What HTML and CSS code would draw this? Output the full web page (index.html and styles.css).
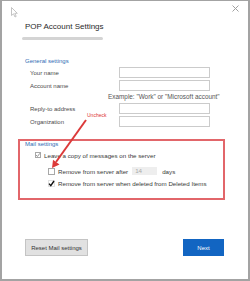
FILE: index.html
```html
<!DOCTYPE html>
<html lang="en">
<head>
    <meta charset="UTF-8">
    <title>POP Account Settings</title>
    <link rel="stylesheet" href="styles.css">
</head>
<body>
    <div class="dialog">
        <svg class="cursor" width="7" height="11" viewBox="0 0 7 11">
            <path d="M0.5 0.5 L0.5 8.5 L2.5 6.8 L4 10 L5.2 9.4 L3.8 6.3 L6.3 6.3 Z" fill="#fff" stroke="#b5b5b5" stroke-width="0.8"/>
        </svg>
        <div class="top">
            <svg class="close" width="7" height="7" viewBox="0 0 7 7">
                <path d="M0.5 0.5 L6.5 6.5 M6.5 0.5 L0.5 6.5" stroke="#a0a0a0" stroke-width="1"/>
            </svg>
        </div>
        <h1 class="title">POP Account Settings</h1>
        <div class="email"></div>

        <h2 class="group">General settings</h2>
        <div class="fields">
            <div class="row"><label>Your name</label><span class="box"></span></div>
            <div class="row"><label>Account name</label><span class="box"></span></div>
            <p class="hint">Example: "Work" or "Microsoft account"</p>
            <div class="row"><label>Reply-to address</label><span class="box"></span></div>
            <div class="row"><label>Organization</label><span class="box"></span></div>
        </div>

        <section class="mail">
            <h2 class="group">Mail settings</h2>
            <div class="check lvl1">
                <span class="cb">
                    <svg width="6" height="6" viewBox="0 0 6 6"><path d="M1 3 L2.4 4.5 L5 1.2" fill="none" stroke="#8a8a8a" stroke-width="0.9"/></svg>
                </span>Leave a copy of messages on the server
            </div>
            <div class="check lvl2">
                <span class="cb big"></span>Remove from server after<span class="days">14</span>days
            </div>
            <div class="check lvl2">
                <span class="cb big dark">
                    <svg width="7" height="7" viewBox="0 0 7 7"><path d="M1 3.6 L2.8 5.6 L6 1" fill="none" stroke="#111" stroke-width="1.4"/></svg>
                </span>Remove from server when deleted from Deleted Items
            </div>
        </section>

        <div class="actions">
            <button class="btn">Reset Mail settings</button>
            <button class="btn primary">Next</button>
        </div>

        <svg class="arrow" width="250" height="281" viewBox="0 0 250 281">
            <line x1="86" y1="120" x2="56" y2="162" stroke="#dc3a3a" stroke-width="2"/>
            <polygon points="52,168 59.5,164.5 53,159.8" fill="#dc3a3a"/>
        </svg>
        <span class="note">Uncheck</span>
    </div>
</body>
</html>
```

FILE: styles.css
```css
*{
    box-sizing: border-box;
    margin: 0;
    padding: 0;
}
body{
    font-family: "Liberation Sans", Arial, sans-serif;
    background: #fff;
}
.dialog{
    position: relative;
    width: 250px;
    height: 281px;
    border: 2px solid #a3a3a3;
    border-top-width: 1px;
    padding: 0 24px 0 23px;
    background: #fff;
    color: #4a4a4a;
}
.cursor{
    position: absolute;
    left: 9px;
    top: 6px;
}
.top{
    height: 14px;
    display: flex;
    justify-content: flex-end;
    align-items: center;
    margin-right: -15px;
}
.title{
    margin-top: 7px;
    font-size: 8px;
    line-height: 10px;
    font-weight: normal;
    color: #2a2a2a;
}
.email{
    margin: 5px 0 0 -3px;
    width: 81px;
    height: 3px;
    background: #d4d4d4;
    border-radius: 2px;
    filter: blur(0.7px);
}
.group{
    font-size: 6px;
    line-height: 8px;
    font-weight: normal;
    color: #2f6db5;
}
.dialog > .group{
    margin-top: 17px;
}
.fields{
    margin-top: 2px;
    padding-left: 5px;
    font-size: 6px;
}
.row{
    display: flex;
    align-items: center;
    height: 11px;
    margin-bottom: 2px;
}
.row label{
    width: 89px;
}
.box{
    width: 91px;
    height: 11px;
    border: 1px solid #cbcbcb;
}
.hint{
    height: 8px;
    line-height: 8px;
    margin: 0 0 2px 78px;
    font-size: 6.4px;
    white-space: nowrap;
    color: #555;
}
.mail{
    margin: 12px -1px 0 -7px;
    border: 2px solid #e2666a;
    padding: 0 5px 11px;
}
.mail .group{
    line-height: 7px;
}
.check{
    display: flex;
    align-items: center;
    height: 8px;
    font-size: 6.2px;
    color: #383838;
    white-space: nowrap;
}
.lvl1{
    margin: 3px 0 0 10px;
}
.lvl2{
    margin: 8px 0 0 23px;
}
.lvl2 + .lvl2{
    margin-top: 4px;
}
.cb{
    display: flex;
    width: 6px;
    height: 6px;
    border: 1px solid #a8a8a8;
    margin-right: 3px;
    align-items: center;
    justify-content: center;
}
.cb svg{
    flex: none;
}
.cb.big{
    width: 7px;
    height: 7px;
}
.cb.dark{
    border-color: #e2e2e2;
}
.days{
    width: 25px;
    height: 8px;
    line-height: 8px;
    margin: 0 5px 0 4px;
    padding-left: 3px;
    background: #eeeeee;
    color: #a9a9a9;
}
.actions{
    margin-top: 39px;
    display: flex;
    justify-content: space-between;
}
.btn{
    height: 17px;
    font-family: inherit;
    font-size: 6px;
    border: 1px solid #c4c4c4;
    background: #e1e1e1;
    color: #333;
    width: 63px;
}
.btn.primary{
    width: 41px;
    border: none;
    background: #1265c2;
    color: #fff;
}
.arrow{
    position: absolute;
    left: -2px;
    top: -1px;
    pointer-events: none;
}
.note{
    position: absolute;
    left: 85px;
    top: 111px;
    font-size: 5px;
    line-height: 6px;
    color: #d33;
}
```
